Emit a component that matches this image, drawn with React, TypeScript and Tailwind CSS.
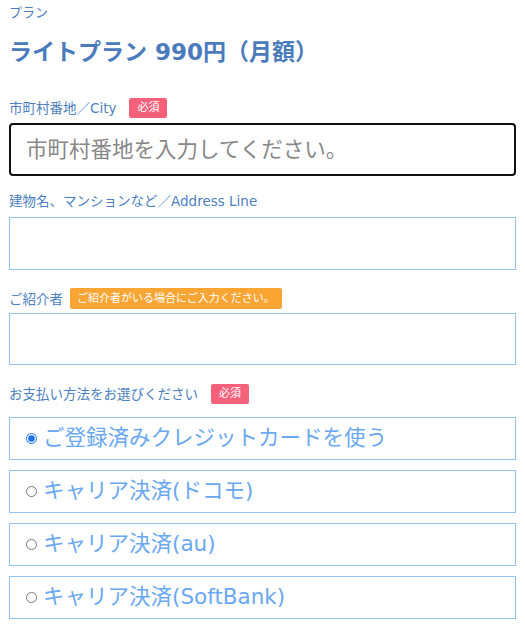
import React, { useState } from "react";

const font = { fontFamily: '"DejaVu Sans", "Noto Sans CJK JP", sans-serif' };

const methods = [
  "ご登録済みクレジットカードを使う",
  "キャリア決済(ドコモ)",
  "キャリア決済(au)",
  "キャリア決済(SoftBank)",
];

function Badge({ children, orange }: { children: React.ReactNode; orange?: boolean }) {
  return (
    <span
      className={
        orange
          ? "ml-[7px] inline-flex h-[21px] items-center rounded-[2px] bg-[#f8a533] px-[7px] text-[11px] text-white"
          : "ml-[13px] inline-flex h-[20px] items-center rounded-[2px] bg-[#f5617b] px-[8px] text-[11px] text-white"
      }
    >
      {children}
    </span>
  );
}

export default function App() {
  const [pay, setPay] = useState(0);
  return (
    <div className="flex min-h-[627px] flex-col bg-white px-[9px] text-[#4d80c0]" style={font}>
      <div className="mt-[4px] text-[13px] leading-[18px]">プラン</div>
      <h1 className="mt-[15px] text-[23px] font-bold leading-[30px] text-[#4a7bbd]">
        ライトプラン 990円（月額）
      </h1>

      <div className="mt-[31px] flex items-center text-[13.5px] leading-[20px]">
        市町村番地／City<Badge>必須</Badge>
      </div>
      <input
        className="mt-[5px] h-[53px] w-full rounded-[4px] border-2 border-[#111] px-[15px] text-[21.5px] text-[#333] outline-none placeholder:text-[#888]"
        placeholder="市町村番地を入力してください。"
        autoFocus
      />

      <div className="mt-[15px] text-[13.5px] leading-[20px]">建物名、マンションなど／Address Line</div>
      <input className="mt-[6px] h-[53px] w-full border border-[#93c1f3] outline-none" />

      <div className="mt-[18px] flex items-center text-[13.5px] leading-[20px]">
        ご紹介者<Badge orange>ご紹介者がいる場合にご入力ください。</Badge>
      </div>
      <input className="mt-[4px] h-[52px] w-full border border-[#93c1f3] outline-none" />

      <div className="mt-[19px] flex items-center text-[13.5px] leading-[20px]">
        お支払い方法をお選びください<Badge>必須</Badge>
      </div>

      <div className="mt-[13px] flex flex-col gap-[10px]">
        {methods.map((m, i) => (
          <label
            key={m}
            className="flex h-[43px] items-center border border-[#93c1f3] pl-[16px] text-[21.5px] text-[#6aa8f2]"
          >
            <input
              type="radio"
              name="pay"
              checked={pay === i}
              onChange={() => setPay(i)}
              className="mr-[6px] h-[11px] w-[11px] accent-[#1a73e8]"
            />
            {m}
          </label>
        ))}
      </div>
    </div>
  );
}
